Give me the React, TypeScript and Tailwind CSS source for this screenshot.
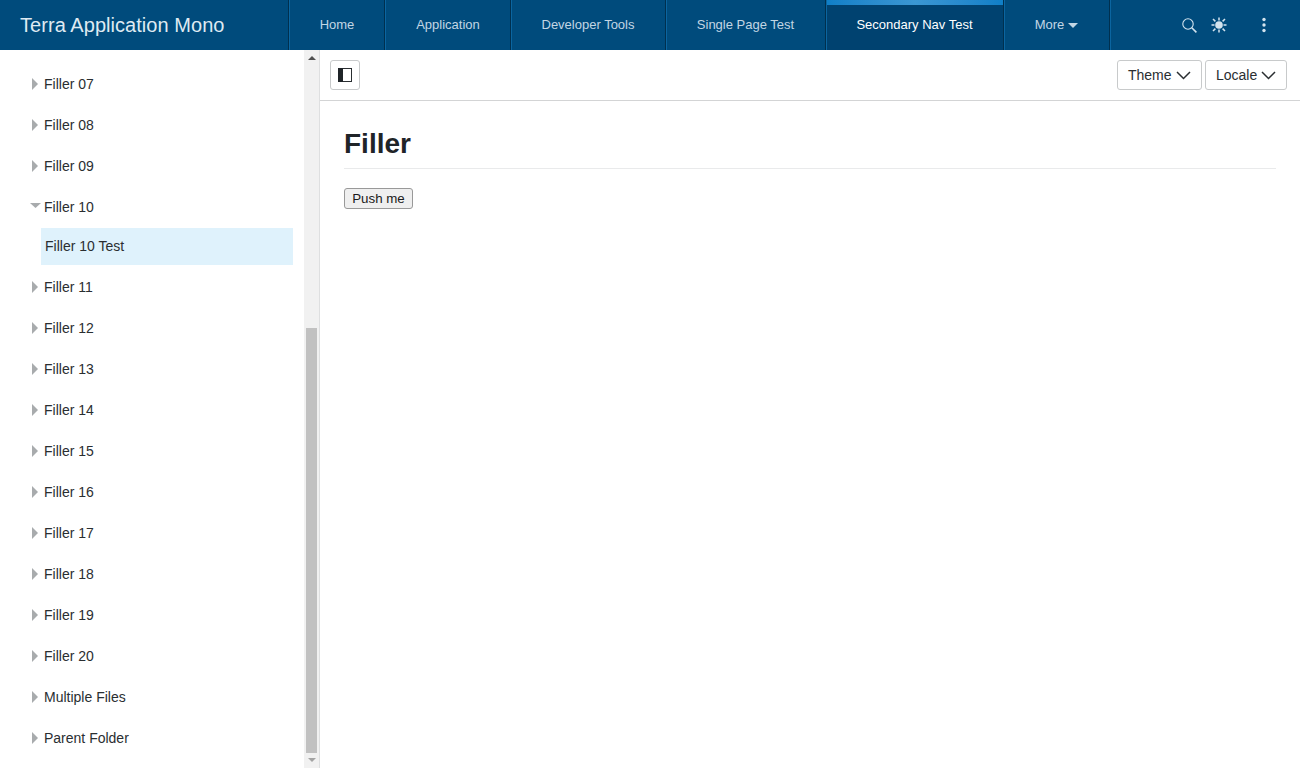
const NAV_ITEMS = [
  { label: "Home", width: "w-[96px] pl-px" },
  { label: "Application", width: "w-[126px] pl-px" },
  { label: "Developer Tools", width: "w-[155px]" },
  { label: "Single Page Test", width: "w-[160px]" },
];

const BEFORE = ["Filler 07", "Filler 08", "Filler 09"];
const AFTER = [
  "Filler 11",
  "Filler 12",
  "Filler 13",
  "Filler 14",
  "Filler 15",
  "Filler 16",
  "Filler 17",
  "Filler 18",
  "Filler 19",
  "Filler 20",
  "Multiple Files",
  "Parent Folder",
];

function TreeRow({ label, open = false }: { label: string; open?: boolean }) {
  return (
    <div className="flex h-[41px] items-center pl-[30px] text-[14px] text-[#2a2e31]">
      <span className="flex w-[14px] shrink-0 items-center">
        {open ? (
          <svg width="11" height="6" viewBox="0 0 11 6" className="-mt-[3px]">
            <path d="M0 0h11L5.5 5z" fill="#a8abad" />
          </svg>
        ) : (
          <svg width="6" height="12" viewBox="0 0 6 12" className="ml-[2px] -mt-[1px]">
            <path d="M0 0l6 6-6 6z" fill="#a8abad" />
          </svg>
        )}
      </span>
      {label}
    </div>
  );
}

function HeaderIcons() {
  return (
    <div className="flex items-center border-l border-[#0b65a0] pl-[71px]">
      <svg width="15" height="15" viewBox="0 0 15 15" fill="none" stroke="#d3e4ef" className="mr-[14px]">
        <circle cx="6" cy="6" r="5.2" strokeWidth="1.1" />
        <path d="M9.8 9.8l4.6 4.6" strokeWidth="1.6" />
      </svg>
      <svg width="16" height="16" viewBox="0 0 16 16" stroke="#d3e4ef" className="mr-[35px]">
        <circle cx="8" cy="8" r="3.8" fill="#d3e4ef" stroke="none" />
        <path
          d="M8 .5v3M8 12.5v3M.5 8h3M12.5 8h3M2 2l2.4 2.4M11.6 11.6L14 14M14 2l-2.4 2.4M4.4 11.6L2 14"
          strokeWidth="1.5"
          fill="none"
        />
      </svg>
      <svg width="4" height="16" viewBox="0 0 4 16" fill="#d3e4ef">
        <circle cx="2" cy="2.5" r="1.7" />
        <circle cx="2" cy="8" r="1.7" />
        <circle cx="2" cy="13.5" r="1.7" />
      </svg>
    </div>
  );
}

function Header() {
  return (
    <header className="flex h-[50px] shrink-0 bg-[#004b7c]">
      <div className="flex w-[288px] shrink-0 items-center pl-[20px] text-[20px] tracking-[0.05px] text-[#dfeaf2]">
        Terra Application Mono
      </div>
      <nav className="flex border-l border-[#00304f]">
        {NAV_ITEMS.map((item) => (
          <div
            key={item.label}
            className={`flex ${item.width} items-center justify-center border-r border-[#00304f] text-[13px] text-[#c2d6e4] shadow-[inset_1px_0_0_#0b65a0]`}
          >
            {item.label}
          </div>
        ))}
        <div className="relative flex w-[178px] items-center justify-center border-r border-[#00304f] bg-[#004270] text-[13px] text-white shadow-[inset_1px_0_0_#0b65a0]">
          <div className="absolute left-px right-0 top-0 h-[5px] bg-gradient-to-r from-[#0f7fc7] via-[#3b97d3] to-[#0f7fc7]" />
          Secondary Nav Test
        </div>
        <div className="flex w-[106px] items-center justify-center gap-[4px] border-r border-[#00304f] text-[13px] text-[#c2d6e4] shadow-[inset_1px_0_0_#0b65a0]">
          More
          <svg width="10" height="5" viewBox="0 0 10 5">
            <path d="M0 0h10L5 5z" fill="#c2d6e4" />
          </svg>
        </div>
      </nav>
      <HeaderIcons />
    </header>
  );
}

function Scrollbar() {
  return (
    <div className="flex w-[15px] shrink-0 flex-col items-center bg-[#f1f1f1] px-[2px]">
      <svg width="8" height="4" viewBox="0 0 8 4" className="mt-[6px] shrink-0">
        <path d="M0 4h8L4 0z" fill="#505050" />
      </svg>
      <div className="h-[268px] shrink-0" />
      <div className="h-[425px] w-full shrink-0 bg-[#c1c1c1]" />
      <svg width="8" height="4" viewBox="0 0 8 4" className="mt-[5px] shrink-0">
        <path d="M0 0h8L4 4z" fill="#a3a3a3" />
      </svg>
    </div>
  );
}

function Sidebar() {
  return (
    <aside className="flex w-[320px] shrink-0 border-r border-[#dedfe0]">
      <div className="flex-1 overflow-hidden pt-[14px]">
        {BEFORE.map((label) => (
          <TreeRow key={label} label={label} />
        ))}
        <TreeRow label="Filler 10" open />
        <div className="mb-[2px] ml-[41px] mr-[11px] flex h-[37px] items-center bg-[#dff2fc] pl-[4px] text-[14px] text-[#2a2e31]">
          Filler 10 Test
        </div>
        {AFTER.map((label) => (
          <TreeRow key={label} label={label} />
        ))}
      </div>
      <Scrollbar />
    </aside>
  );
}

function SelectButton({ label, width }: { label: string; width: string }) {
  return (
    <button
      className={`flex h-[30px] ${width} items-center justify-between rounded-[3px] border border-[#c8cacb] bg-white pl-[10px] pr-[10px] text-[14px] text-[#2a2e31]`}
    >
      {label}
      <svg width="15" height="9" viewBox="0 0 15 9" fill="none" stroke="#2a2e31" strokeWidth="1.5" className="shrink-0">
        <path d="M1 1l6.5 6.5L14 1" />
      </svg>
    </button>
  );
}

function Toolbar() {
  return (
    <div className="flex h-[51px] shrink-0 items-center justify-between border-b border-[#d3d4d5] pl-[10px] pr-[13px]">
      <button className="flex h-[30px] w-[30px] items-center justify-center rounded-[3px] border border-[#c8cacb] bg-white">
        <svg width="14" height="14" viewBox="0 0 14 14">
          <rect x="0.5" y="0.5" width="13" height="13" fill="#fff" stroke="#2a2e31" />
          <rect x="0" y="0" width="5" height="14" fill="#1f2428" />
        </svg>
      </button>
      <div className="flex gap-[3px]">
        <SelectButton label="Theme" width="w-[85px]" />
        <SelectButton label="Locale" width="w-[82px]" />
      </div>
    </div>
  );
}

export default function App() {
  return (
    <div className="flex h-[768px] w-[1300px] flex-col overflow-hidden bg-white font-['Liberation_Sans',Arial,sans-serif]">
      <Header />
      <div className="flex min-h-0 flex-1">
        <Sidebar />
        <main className="min-w-0 flex-1">
          <Toolbar />
          <div className="px-[24px] pt-[25px]">
            <h1 className="border-b border-[#e9eaeb] pb-[6px] text-[28px] font-bold leading-[36px] text-[#1f2428]">
              Filler
            </h1>
            <button className="mt-[19px] flex h-[21px] w-[69px] items-center justify-center rounded-[3px] border border-[#999999] bg-[#efefef] text-[13.33px] text-[#1a1a1a]">
              Push me
            </button>
          </div>
        </main>
      </div>
    </div>
  );
}
